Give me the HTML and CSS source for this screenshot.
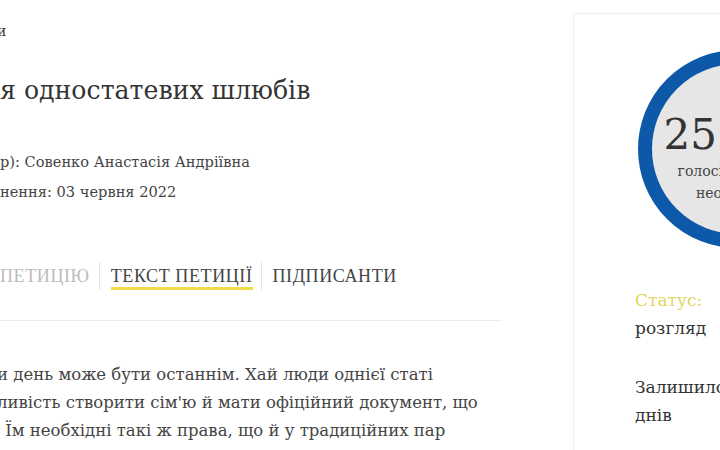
FILE: index.html
```html
<!DOCTYPE html>
<html lang="uk">
<head>
<meta charset="utf-8">
<title>Петиція</title>
<link rel="stylesheet" href="styles.css">
</head>
<body>
<div class="page">
  <main class="main">
    <div class="crumbs"><span class="cut"><span class="in">Головна / Петиці</span></span>и</div>
    <h1 class="title"><span class="cut"><span class="in">Легалізаці</span></span>я одностатевих шлюбів</h1>
    <div class="meta">
      <div class="meta-line"><span class="cut"><span class="in">Автор (ініціато</span></span>р): Совенко Анастасія Андріївна</div>
      <div class="meta-line"><span class="cut"><span class="in">Дата оприлюд</span></span>нення: 03 червня 2022</div>
    </div>
    <nav class="tabs">
      <a class="tab tab-first"><span class="cut"><span class="in">ПІДПИСАТИ </span></span>ПЕТИЦІЮ</a>
      <a class="tab tab-active"><span class="tab-text">ТЕКСТ ПЕТИЦІЇ</span></a>
      <a class="tab"><span class="tab-text">ПІДПИСАНТИ</span></a>
    </nav>
    <div class="text">
      <p class="line lead"><span class="cut"><span class="in">Україна у стані війни і кожн</span></span>и день може бути останнім. Хай люди однієї статі</p>
      <p class="line lead"><span class="cut"><span class="in">отримають мож</span></span>ливість створити сім'ю й мати офіційний документ, що</p>
      <p class="line"><span class="cut"><span class="in">це підтверджує.</span></span> Їм необхідні такі ж права, що й у традиційних пар</p>
    </div>
  </main>
  <aside class="side">
    <div class="circle">
      <div class="count">25 000</div>
      <div class="count-label">голосів із 25000<br>необхідних</div>
    </div>
    <div class="status"><span class="status-label">Статус:</span><br>розгляд</div>
    <div class="left">Залишилось<br>днів</div>
  </aside>
</div>
</body>
</html>
```
FILE: styles.css
```css
html, body {
  margin: 0;
  padding: 0;
  background: #fff;
  overflow: hidden;
}
body {
  font-family: "DejaVu Serif", "Liberation Serif", serif;
  color: #333;
}
.page {
  display: flex;
  width: 900px;
}
.main {
  width: 502px;
  flex: none;
}
.cut {
  display: inline-block;
  width: 0;
  direction: rtl;
  white-space: nowrap;
  vertical-align: baseline;
}
.in {
  direction: ltr;
  unicode-bidi: isolate;
}
.crumbs {
  font-size: 14px;
  line-height: 20px;
  padding-top: 21px;
  margin-left: -3px;
  color: #333;
}
.title {
  margin: 0;
  padding-top: 32px;
  font-size: 25.2px;
  line-height: 36px;
  font-weight: normal;
  color: #333;
}
.meta {
  padding-top: 38px;
  font-size: 14.6px;
  line-height: 30px;
  color: #444;
}
.tabs {
  display: flex;
  margin-top: 55px;
  padding-bottom: 30px;
  border-bottom: 1px solid #ebebeb;
}
.tab {
  font-family: "Liberation Serif", serif;
  font-size: 18px;
  letter-spacing: 0.6px;
  line-height: 28px;
  color: #444;
  padding: 0 8px 0 11px;
  border-left: 1px solid #e4e4e4;
}
.tab-first {
  color: #bbb;
  border-left: none;
  padding-left: 0;
  padding-right: 9px;
}
.tab-text {
  display: inline-block;
}
.tab-active .tab-text {
  box-shadow: inset 0 -3px 0 #f2dc45;
}
.text {
  padding-top: 40px;
  font-size: 16.5px;
  line-height: 28px;
  color: #444;
}
.line {
  margin: 0;
  white-space: nowrap;
}
.lead { margin-left: -3px; }

.side {
  margin-left: 71px;
  margin-top: 13px;
  width: 300px;
  height: 500px;
  border: 1px solid #eeeeee;
  border-right: none;
  padding: 36px 0 0 61px;
  box-sizing: border-box;
}
.circle {
  width: 198px;
  height: 198px;
  margin-left: 3px;
  box-sizing: border-box;
  border: 14px solid #0d58a8;
  border-radius: 50%;
  background: #e6e6e6;
  text-align: center;
  padding-top: 46px;
}
.count {
  font-size: 42px;
  line-height: 50px;
  color: #333;
  white-space: nowrap;
}
.count-label {
  font-size: 14px;
  line-height: 22px;
  color: #444;
}
.status {
  margin-top: 38px;
  font-size: 17px;
  line-height: 28px;
  color: #333;
}
.status-label { color: #e3d45e; }
.left {
  margin-top: 31px;
  font-size: 17px;
  line-height: 28px;
  color: #333;
}
```
